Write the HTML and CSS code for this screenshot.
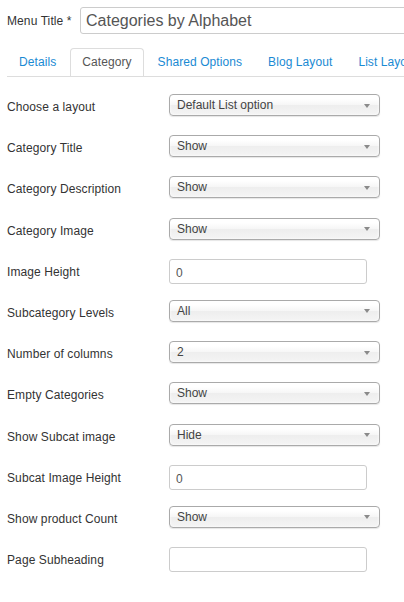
FILE: index.html
```html
<!DOCTYPE html>
<html lang="en">
<head>
    <meta charset="UTF-8">
    <meta name="viewport" content="width=device-width, initial-scale=1.0">
    <title>Edit Menu Item</title>
    <link rel="stylesheet" href="styles.css">
</head>
<body>
    <div class="page">
        <div class="title-row">
            <label class="title-label" for="menu-title">Menu Title *</label>
            <input class="title-input" id="menu-title" type="text" value="Categories by Alphabet">
        </div>

        <ul class="tabs">
            <li class="tab">Details</li>
            <li class="tab active">Category</li>
            <li class="tab">Shared Options</li>
            <li class="tab">Blog Layout</li>
            <li class="tab">List Layouts</li>
        </ul>

        <div class="fields">
            <div class="field">
                <label class="field-label">Choose a layout</label>
                <div class="select"><span>Default List option</span><i class="arrow"></i></div>
            </div>
            <div class="field">
                <label class="field-label">Category Title</label>
                <div class="select"><span>Show</span><i class="arrow"></i></div>
            </div>
            <div class="field">
                <label class="field-label">Category Description</label>
                <div class="select"><span>Show</span><i class="arrow"></i></div>
            </div>
            <div class="field">
                <label class="field-label">Category Image</label>
                <div class="select"><span>Show</span><i class="arrow"></i></div>
            </div>
            <div class="field">
                <label class="field-label">Image Height</label>
                <input class="text-input" type="text" value="0">
            </div>
            <div class="field">
                <label class="field-label">Subcategory Levels</label>
                <div class="select"><span>All</span><i class="arrow"></i></div>
            </div>
            <div class="field">
                <label class="field-label">Number of columns</label>
                <div class="select"><span>2</span><i class="arrow"></i></div>
            </div>
            <div class="field">
                <label class="field-label">Empty Categories</label>
                <div class="select"><span>Show</span><i class="arrow"></i></div>
            </div>
            <div class="field">
                <label class="field-label">Show Subcat image</label>
                <div class="select"><span>Hide</span><i class="arrow"></i></div>
            </div>
            <div class="field">
                <label class="field-label">Subcat Image Height</label>
                <input class="text-input" type="text" value="0">
            </div>
            <div class="field">
                <label class="field-label">Show product Count</label>
                <div class="select"><span>Show</span><i class="arrow"></i></div>
            </div>
            <div class="field">
                <label class="field-label">Page Subheading</label>
                <input class="text-input" type="text" value="">
            </div>
        </div>
    </div>
</body>
</html>
```

FILE: styles.css
```css
body {
    margin: 0;
    background: #fff;
    font-family: "Liberation Sans", Arial, sans-serif;
    font-size: 12px;
    color: #333;
    overflow: hidden;
}

.page {
    padding: 7px 0 0 7px;
}

/* menu title */
.title-row {
    display: flex;
    align-items: center;
    height: 27px;
}

.title-label {
    width: 73px;
    flex-shrink: 0;
    letter-spacing: 0.1px;
}

.title-input {
    width: 380px;
    flex-shrink: 0;
    height: 27px;
    box-sizing: border-box;
    margin: 0;
    padding: 0 5px;
    border: 1px solid #ccc;
    border-radius: 3px;
    font-family: inherit;
    font-size: 16px;
    color: #555;
    outline: none;
}

/* tabs */
.tabs {
    display: flex;
    list-style: none;
    margin: 14px 0 0;
    padding: 0;
    border-bottom: 1px solid #ddd;
    white-space: nowrap;
    overflow: hidden;
}

.tab {
    flex-shrink: 0;
    padding: 0 11px;
    margin-right: 2px;
    margin-bottom: -1px;
    line-height: 27px;
    border: 1px solid transparent;
    border-radius: 4px 4px 0 0;
    color: #1a8ad3;
    letter-spacing: 0.08px;
}

.tab.active {
    color: #555;
    background: #fff;
    border-color: #ddd #ddd transparent;
}

/* form rows */
.fields {
    margin-top: 17px;
}

.field {
    display: flex;
    align-items: flex-start;
    height: 41.2px;
}

.field-label {
    width: 162px;
    flex-shrink: 0;
    line-height: 26px;
    letter-spacing: 0.1px;
}

.select {
    width: 211px;
    height: 22px;
    box-sizing: border-box;
    display: flex;
    justify-content: space-between;
    align-items: center;
    padding: 0 9px 0 7px;
    border: 1px solid #aaa;
    border-radius: 4px;
    background: linear-gradient(#fff 20%, #f6f6f6 50%, #eee 52%, #f4f4f4 100%);
    box-shadow: 0 0 3px #fff inset, 0 1px 1px rgba(0, 0, 0, 0.1);
    color: #444;
    line-height: 20px;
}

.arrow {
    width: 0;
    height: 0;
    border-left: 3px solid transparent;
    border-right: 3px solid transparent;
    border-top: 4px solid #8a8a8a;
    margin-top: 1px;
}

.text-input {
    width: 198px;
    height: 25px;
    box-sizing: border-box;
    margin: 0;
    padding: 4px 6px 0;
    border: 1px solid #ccc;
    border-radius: 3px;
    font-family: inherit;
    font-size: 12px;
    line-height: 18px;
    color: #555;
    outline: none;
}
```
